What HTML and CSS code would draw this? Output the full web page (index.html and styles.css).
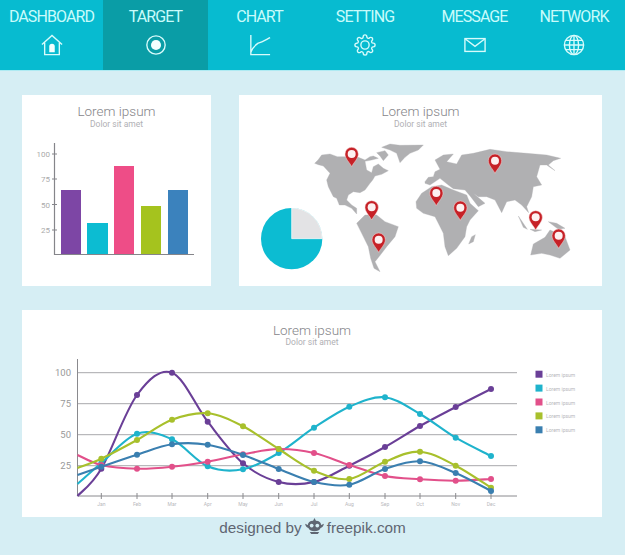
FILE: index.html
```html
<!DOCTYPE html>
<html lang="en">
<head>
    <meta charset="UTF-8">
    <meta name="viewport" content="width=device-width, initial-scale=1.0">
    <title>Dashboard</title>
    <link rel="stylesheet" href="styles.css">
</head>
<body>
    <nav class="nav">
        <a class="tab">
            <span>DASHBOARD</span>
            <svg class="icon" viewBox="0 0 24 24"><path d="M1 11.5 12 1.500 23 11.500M4 9.500V22.500H20V9.500"/><path class="solid" d="M9 20V13.500a3 3 0 0 1 6 0V20z"/></svg>
        </a>
        <a class="tab active">
            <span>TARGET</span>
            <svg class="icon" viewBox="0 0 24 24"><circle cx="12" cy="12" r="10"/><circle class="solid" cx="12" cy="12" r="5.500"/></svg>
        </a>
        <a class="tab">
            <span>CHART</span>
            <svg class="icon" viewBox="0 0 24 24"><path d="M2 1V22.500H23M2 20C4 14 7 12 10 10 14 9 19 6 23 4"/></svg>
        </a>
        <a class="tab">
            <span>SETTING</span>
            <svg class="icon" viewBox="0 0 24 24"><circle cx="12" cy="12" r="4.500"/><path d="M19.400 15a1.650 1.650 0 0 0 .33 1.820l.06.06a2 2 0 0 1 0 2.830 2 2 0 0 1-2.830 0l-.06-.06a1.650 1.650 0 0 0-1.820-.33 1.650 1.650 0 0 0-1 1.510V21a2 2 0 0 1-2 2 2 2 0 0 1-2-2v-.09A1.650 1.650 0 0 0 9 19.400a1.650 1.650 0 0 0-1.820.33l-.06.06a2 2 0 0 1-2.830 0 2 2 0 0 1 0-2.830l.06-.06a1.650 1.650 0 0 0 .33-1.820 1.650 1.650 0 0 0-1.510-1H3a2 2 0 0 1-2-2 2 2 0 0 1 2-2h.09A1.650 1.650 0 0 0 4.600 9a1.650 1.650 0 0 0-.33-1.820l-.06-.06a2 2 0 0 1 0-2.830 2 2 0 0 1 2.830 0l.06.06a1.650 1.650 0 0 0 1.820.33H9a1.650 1.650 0 0 0 1-1.510V3a2 2 0 0 1 2-2 2 2 0 0 1 2 2v.09a1.650 1.650 0 0 0 1 1.510 1.650 1.650 0 0 0 1.820-.33l.06-.06a2 2 0 0 1 2.830 0 2 2 0 0 1 0 2.830l-.06.06a1.650 1.650 0 0 0-.33 1.820V9a1.650 1.650 0 0 0 1.510 1H21a2 2 0 0 1 2 2 2 2 0 0 1-2 2h-.09a1.650 1.650 0 0 0-1.510 1z"/></svg>
        </a>
        <a class="tab">
            <span>MESSAGE</span>
            <svg class="icon" viewBox="0 0 24 24"><rect x="1" y="5" width="22" height="14"/><path d="M1.500 5.500 12 13.500 22.500 5.500"/></svg>
        </a>
        <a class="tab">
            <span>NETWORK</span>
            <svg class="icon" viewBox="0 0 24 24"><circle cx="12" cy="12" r="10.500"/><ellipse cx="12" cy="12" rx="5" ry="10.500"/><path d="M12 1.500V22.500M1.500 12H22.500M3 7H21M3 17H21"/></svg>
        </a>
    </nav>

    <main class="board">
        <section class="card">
            <h2>Lorem ipsum</h2>
            <p>Dolor sit amet</p>
            <svg class="plot" viewBox="22 135 189 151" width="189" height="151">
                <g class="bars">
                    <rect x="61" y="190" width="20" height="64" fill="#7d46a5"/>
                    <rect x="87" y="223" width="21" height="31" fill="#0cbcd2"/>
                    <rect x="114" y="166" width="20" height="88" fill="#ee4d87"/>
                    <rect x="141" y="206" width="20" height="48" fill="#a5c31e"/>
                    <rect x="168" y="190" width="20" height="64" fill="#3b82bd"/>
                </g>
                <path class="axis" d="M54.500 143V254.500H194M52 154H57M52 179H57M52 204.500H57M52 230H57"/>
                <g class="ticks">
                    <text x="50" y="157">100</text>
                    <text x="50" y="182">75</text>
                    <text x="50" y="207.500">50</text>
                    <text x="50" y="233">25</text>
                </g>
            </svg>
        </section>

        <section class="card">
            <h2>Lorem ipsum</h2>
            <p>Dolor sit amet</p>
            <svg class="plot" viewBox="-3 135 1089 453" width="363" height="151">
                <g class="land" transform="translate(210 150)">
                    <path d="M14 70 24 60 35 45 60 42 82 50 105 50 145 52 165 60 180 50 190 48 205 55 185 60 165 64 170 90 185 98 190 80 205 72 220 85 235 92 215 103 195 108 188 120 180 130 165 150 150 158 130 155 115 165 110 180 125 195 140 205 140 222 125 205 105 195 88 195 80 175 70 170 55 140 50 120 60 100 40 78 25 74z"/>
                    <path d="M200 38 225 32 235 45 220 62 210 48z"/>
                    <path d="M215 22 240 12 270 16 340 15 325 30 300 40 285 52 270 68 260 40 240 30z"/>
                    <path d="M140 250 165 225 200 225 225 245 265 260 255 290 230 320 215 340 195 365 210 395 192 385 182 355 175 320 155 280z"/>
                </g>
                <g class="land" transform="translate(510 150)">
                    <path d="M18 185 35 160 65 140 95 135 130 150 170 165 180 190 205 212 180 240 170 260 165 290 140 325 115 347 105 320 100 280 85 250 75 230 40 220 20 205z"/>
                    <path d="M185 290 196 284 190 305 176 312z"/>
                    <path d="M45 125 55 112 70 110 75 95 90 88 75 60 100 45 130 42 110 65 140 72 155 45 190 40 240 28 290 35 350 40 410 45 452 55 430 62 415 75 435 92 410 75 390 75 380 110 395 135 370 140 365 170 350 200 356 218 335 195 315 180 290 185 275 218 255 180 230 170 205 170 190 160 225 190 205 200 182 170 165 150 130 146 115 135 90 115 60 135 45 130z"/>
                    <path d="M325 228 352 268 340 262z"/>
                    <path d="M360 268 395 270 375 275z"/>
                    <path d="M415 245 440 250 465 265 445 268z"/>
                    <path d="M362 345 370 312 405 292 420 270 465 290 480 330 450 355 420 345 395 340z"/>
                </g>
                <g class="pie">
                    <circle cx="155" cy="446" r="92" fill="#0cbcd2"/>
                    <path d="M155 446V354A92 92 0 0 1 247 446z" fill="#e3e3e5" stroke="#fff" stroke-width="2"/>
                </g>
                <g id="pins"></g>
            </svg>
        </section>

        <section class="card wide">
            <h2>Lorem ipsum</h2>
            <p>Dolor sit amet</p>
            <svg class="plot" id="lines" viewBox="22 350 580 167" width="580" height="167"></svg>
        </section>
    </main>

    <footer class="credit">
        <span>designed by</span>
        <svg class="logo" viewBox="0 0 20 17"><path d="M10 0 11.500 3C15 3 17 5 17 7.500L20 6C19.500 9 18 10 16.500 10.500 15.500 13 13 14 10 14S4.500 13 3.500 10.500C2 10 .5 9 0 6L3 7.500C3 5 5 3 8.500 3z"/><path d="M5 15H15L13.500 17H6.500z"/><circle class="eye" cx="7" cy="8" r="2"/><circle class="eye" cx="13" cy="8" r="2"/></svg>
        <span>freepik.com</span>
    </footer>

    <script src="chart.js"></script>
</body>
</html>
```

FILE: styles.css
```css
* {
    box-sizing: border-box;
}
body {
    margin: 0;
    height: 555px;
    overflow: hidden;
    background: #d6eef4;
    font-family: Roboto, Arial, sans-serif;
    color: #999;
}
.nav {
    display: grid;
    grid-template-columns: 103px 105px 103px 108px 111px 88px;
    height: 71px;
    background: #07bbd0;
    border-bottom: 1px solid #aeeaf2;
}
.tab {
    display: flex;
    flex-direction: column;
    align-items: center;
    padding-top: 7px;
    color: #c9fbfb;
    font-size: 16px;
    letter-spacing: -0.9px;
    line-height: 19px;
}
.tab.active {
    background: #0a9da6;
}
.icon {
    width: 22px;
    height: 22px;
    margin-top: 8px;
    fill: none;
    stroke: #d8fbfb;
    stroke-width: 1.500;
}
.icon .solid {
    fill: #f2ffff;
    stroke: none;
}
.board {
    display: grid;
    grid-template-columns: 189px 363px;
    grid-template-rows: 191px 207px;
    gap: 24px 28px;
    padding: 24px 0 0 22px;
}
.card {
    background: #fff;
    text-align: center;
}
.card.wide {
    grid-column: 1 / 3;
    width: 580px;
}
.card h2 {
    margin: 0;
    padding-top: 9px;
    font-size: 13.500px;
    font-weight: 300;
    line-height: 15px;
    color: #858589;
}
.card p {
    margin: 0;
    height: 16px;
    font-size: 8.500px;
    line-height: 10px;
    color: #b0b0b4;
}
.card.wide h2 {
    padding-top: 13px;
    line-height: 14px;
}
.card.wide p {
    height: 13px;
}
.plot {
    display: block;
}
.axis {
    fill: none;
    stroke: #85858a;
    stroke-width: 1.200;
}
.ticks text {
    font-size: 8px;
    text-anchor: end;
    fill: #aaa;
}
.land path {
    fill: #b0b0b2;
    stroke: #b0b0b2;
    stroke-width: 1;
    stroke-linejoin: round;
}
.pin-head {
    fill: #c62127;
    stroke: #f6d5d5;
    stroke-width: 1.500;
}
.pin-dot {
    fill: #fdf0f0;
}
.grid-line {
    stroke: #a8a8ac;
    stroke-width: 1;
}
.chart-axis {
    fill: none;
    stroke: #8a8a8e;
    stroke-width: 1;
}
.value-label {
    font-size: 9.500px;
    text-anchor: end;
    fill: #999;
}
.month-label {
    font-size: 5px;
    text-anchor: middle;
    fill: #b8b8bc;
}
.legend-label {
    font-size: 5px;
    fill: #b8b8bc;
}
.series {
    fill: none;
    stroke-width: 2.100;
}
.credit {
    display: flex;
    justify-content: center;
    align-items: center;
    gap: 3px;
    width: 625px;
    height: 22px;
    font-family: "Liberation Sans", Arial, sans-serif;
    font-size: 15.300px;
    color: #5f6672;
}
.logo {
    width: 19px;
    height: 16px;
    fill: #5f6672;
    margin-top: -5px;
}
.logo .eye {
    fill: #d6eef4;
}
```

FILE: chart.js
```js
const NS = 'http://www.w3.org/2000/svg';

function add(parent, tag, attrs, text) {
    const el = document.createElementNS(NS, tag);
    for (const key in attrs) el.setAttribute(key, attrs[key]);
    if (text) el.textContent = text;
    parent.appendChild(el);
    return el;
}

// Map pins, in the map's own units
const pins = document.getElementById('pins');
[[335, 192], [395, 352], [416, 449], [589, 309], [661, 353], [765, 212], [887, 382], [956, 437]].forEach(function (p) {
    const x = p[0], y = p[1];
    add(pins, 'path', {
        class: 'pin-head',
        transform: 'translate(' + x + ' ' + y + ')',
        d: 'M0 38C-5 27-20 14-20 0A20 20 0 0 1 20 0C20 14 5 27 0 38z'
    });
    add(pins, 'circle', { class: 'pin-dot', cx: x, cy: y, r: 12 });
});

// Line chart
const svg = document.getElementById('lines');
const months = ['Jan', 'Feb', 'Mar', 'Apr', 'May', 'Jun', 'Jul', 'Aug', 'Sep', 'Oct', 'Nov', 'Dec'];
const monthX = [101.3, 137, 172, 207.7, 243, 278.7, 314, 349.3, 385, 420, 455.7, 491];
const series = [
    { color: '#6a3f97', start: 496, y: [468.7, 395, 372.7, 421.7, 463.3, 482, 482, 465.7, 447, 426, 407, 389] },
    { color: '#1fb3cc', start: 484, y: [463, 433.7, 439.3, 466.3, 469.3, 453, 427.7, 406.7, 397.3, 414, 437.7, 456] },
    { color: '#e2508a', start: 455, y: [465, 468.7, 466.7, 461.7, 454.3, 449, 453, 465, 476, 479.3, 480.7, 479] },
    { color: '#a8c02c', start: 468, y: [458.7, 440, 419.7, 413.3, 426.3, 449, 470.7, 479, 461.7, 451.7, 465.7, 487.700] },
    { color: '#3a7fb0', start: 475, y: [466.7, 454.7, 444.3, 444.7, 455, 469, 482, 484.7, 469, 461.3, 473, 491] }
];

[[372.7, '100'], [403.7, '75'], [434.7, '50'], [465.7, '25']].forEach(function (g) {
    add(svg, 'line', { class: 'grid-line', x1: 77, x2: 517, y1: g[0], y2: g[0] });
    add(svg, 'text', { class: 'value-label', x: 71, y: g[0] + 3.500 }, g[1]);
});

add(svg, 'path', { class: 'chart-axis', d: 'M77.500 359V496H517' });

months.forEach(function (m, i) {
    add(svg, 'line', { class: 'chart-axis', x1: monthX[i], x2: monthX[i], y1: 493, y2: 499 });
    add(svg, 'text', { class: 'month-label', x: monthX[i], y: 506 }, m);
});

// Smooth curve through the points (Catmull-Rom turned into beziers)
function curve(pts) {
    let d = 'M' + pts[0][0] + ' ' + pts[0][1];
    for (let i = 0; i < pts.length - 1; i++) {
        const p0 = pts[i - 1] || pts[i];
        const p1 = pts[i];
        const p2 = pts[i + 1];
        const p3 = pts[i + 2] || p2;
        d += 'C' + (p1[0] + (p2[0] - p0[0]) / 6).toFixed(1) + ' ' + (p1[1] + (p2[1] - p0[1]) / 6).toFixed(1) +
            ' ' + (p2[0] - (p3[0] - p1[0]) / 6).toFixed(1) + ' ' + (p2[1] - (p3[1] - p1[1]) / 6).toFixed(1) +
            ' ' + p2[0] + ' ' + p2[1];
    }
    return d;
}

series.forEach(function (s, n) {
    const pts = [[77.5, s.start]].concat(s.y.map(function (y, i) { return [monthX[i], y]; }));
    add(svg, 'path', { class: 'series', stroke: s.color, d: curve(pts) });
    pts.slice(1).forEach(function (p) {
        add(svg, 'circle', { cx: p[0], cy: p[1], r: 3, fill: s.color });
    });
    const top = 370.7 + n * 13.9;
    add(svg, 'rect', { x: 535.5, y: top, width: 7, height: 7, fill: s.color });
    add(svg, 'text', { class: 'legend-label', x: 546, y: top + 6 }, 'Lorem ipsum');
});
```
